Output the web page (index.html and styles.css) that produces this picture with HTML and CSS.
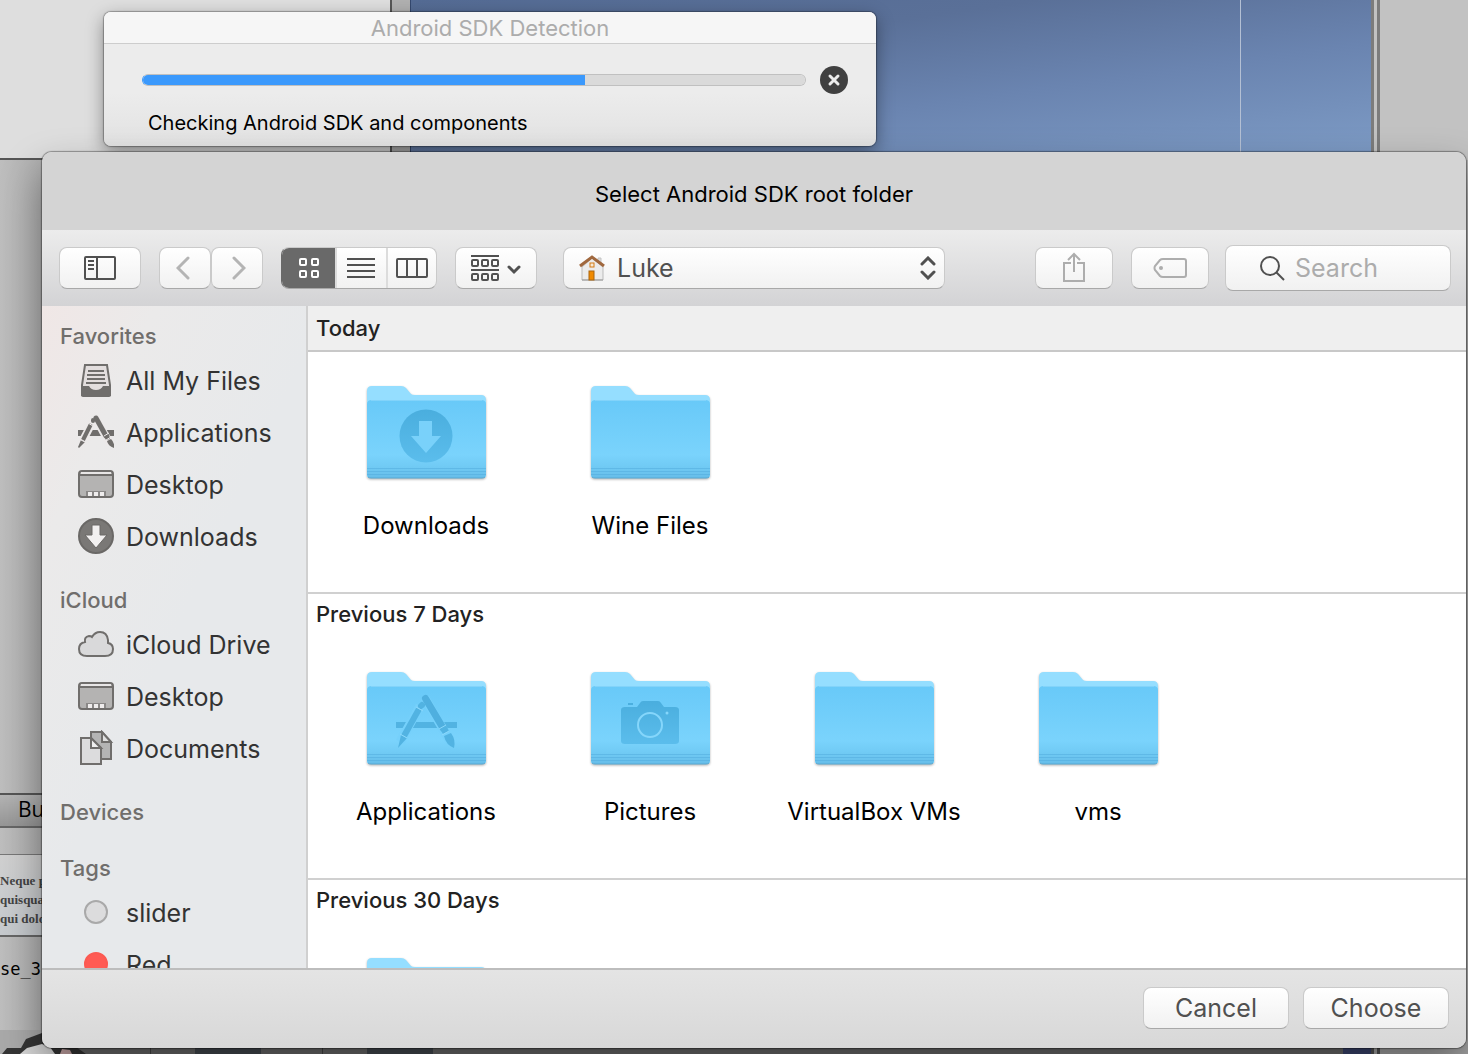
FILE: index.html
```html
<!DOCTYPE html>
<html lang="en">
<head>
    <meta charset="UTF-8">
    <meta name="viewport" content="width=device-width, initial-scale=1.0">
    <title>Select Android SDK root folder</title>
    <link rel="stylesheet" href="styles.css">
</head>
<body>
    <!-- shared icons -->
    <svg class="defs" aria-hidden="true">
        <defs>
            <linearGradient id="front" x1="0" y1="0" x2="0" y2="1">
                <stop offset="0" stop-color="#68c9f8"/>
                <stop offset="0.7" stop-color="#7ad3fc"/>
                <stop offset="0.86" stop-color="#70caf4"/>
                <stop offset="1" stop-color="#66bde9"/>
            </linearGradient>
            <linearGradient id="glyph" x1="0" y1="0" x2="0" y2="1">
                <stop offset="0" stop-color="#4aaede"/>
                <stop offset="1" stop-color="#5bbdec"/>
            </linearGradient>
            <symbol id="folder" viewBox="0 0 120 98">
                <path d="M1 92V6q0-5 5-5h29q3 0 5 2l5 6q1 1 4 1h66q5 0 5 5v77z" fill="#95deff"/>
                <path d="M1 19q0-4 5-4h109q5 0 5 4v70q0 4-4 4H5q-4 0-4-4z" fill="url(#front)"/>
                <path d="M5 15.5h111" stroke="#82d3fa" fill="none"/>
                <path d="M1 83.5h119M1 86.500h119M1 89.500h119" stroke="#4fa9dc" stroke-opacity=".5" fill="none"/>
                <path d="M2 92q1 1 3 1h111q2 0 3-1" stroke="#58a9d2" fill="none"/>
            </symbol>
            <symbol id="desktop" viewBox="0 0 36 28">
                <rect x="1" y="1" width="34" height="26" rx="3" fill="#b4b3b2" stroke="#706e6c" stroke-width="2"/>
                <path d="M3 2h30v2H3z" fill="#e8e6e6"/>
                <path d="M1 5h34" stroke="#706e6c" stroke-width="2"/>
                <path d="M8 26v-5h20v5z" fill="#8a8887"/>
                <path d="M10 22h4v4h-4zM16 22h4v4h-4zM22 22h4v4h-4z" fill="#efeded"/>
            </symbol>
        </defs>
    </svg>

    <div class="backdrop">
        <div class="editor">
            <div class="editor-side"></div>
            <div class="editor-canvas"><span class="guide"></span></div>
            <div class="editor-right"></div>
        </div>
        <div class="palette">
            <div class="palette-tab">Bu</div>
            <div class="palette-card">
                <p>Neque p</p>
                <p>quisqua</p>
                <p>qui dolo</p>
            </div>
            <div class="palette-name">se_3</div>
        </div>
        <div class="dock">
            <svg width="150" height="24" viewBox="0 0 150 24" aria-hidden="true">
                <path d="M0 0h60v24H0z" fill="#a9a9a9"/>
                <path d="M2 24l5-6h14l5-9 16-6 20 4 24 17z" fill="#353535"/>
                <path d="M20 24l7-6 15-4 8 3 5 7z" fill="#d8d8d8"/>
                <path d="M62 19l8 1 2 4H60z" fill="#caa"/>
            </svg>
            <span class="dock-tab"></span>
            <span class="dock-tab"></span>
            <span class="dock-fill"></span>
            <span class="dock-blue"></span>
            <span class="dock-end"></span>
        </div>
    </div>

    <section class="progress-window">
        <h2>Android SDK Detection</h2>
        <div class="progress-row">
            <progress id="check" max="664" value="443"></progress>
            <button class="stop" aria-label="Stop">
                <svg width="28" height="28" viewBox="0 0 28 28">
                    <circle cx="14" cy="14" r="14" fill="#404040"/>
                    <path d="M10 10l8 8M18 10l-8 8" stroke="#ececec" stroke-width="3" stroke-linecap="round"/>
                </svg>
            </button>
        </div>
        <label for="check">Checking Android SDK and components</label>
    </section>

    <section class="dialog">
        <h1>Select Android SDK root folder</h1>

        <div class="toolbar">
            <button class="btn" aria-label="Sidebar">
                <svg width="32" height="24" viewBox="0 0 32 24" fill="none" stroke="#505050" stroke-width="2">
                    <rect x="1" y="1" width="30" height="22" rx="1"/>
                    <path d="M13 1v22M4 5h6M4 9h6M4 13h6"/>
                </svg>
            </button>
            <div class="nav">
                <button class="btn" aria-label="Back">
                    <svg width="18" height="24" viewBox="0 0 18 24" fill="none" stroke="#b4b4b4" stroke-width="3" stroke-linecap="round"><path d="M12 2L2 12l10 10"/></svg>
                </button>
                <button class="btn" aria-label="Forward">
                    <svg width="18" height="24" viewBox="0 0 18 24" fill="none" stroke="#b4b4b4" stroke-width="3" stroke-linecap="round"><path d="M6 2l10 10L6 22"/></svg>
                </button>
            </div>
            <div class="views">
                <button class="active" aria-label="Icons">
                    <svg width="20" height="20" viewBox="0 0 20 20" fill="none" stroke="#fff" stroke-width="2">
                        <rect x="1" y="1" width="6" height="6" rx="1"/><rect x="13" y="1" width="6" height="6" rx="1"/>
                        <rect x="1" y="13" width="6" height="6" rx="1"/><rect x="13" y="13" width="6" height="6" rx="1"/>
                    </svg>
                </button>
                <button aria-label="List">
                    <svg width="28" height="20" viewBox="0 0 28 20" stroke="#505050" stroke-width="2"><path d="M0 1h28M0 7h28M0 13h28M0 19h28"/></svg>
                </button>
                <button aria-label="Columns">
                    <svg width="32" height="20" viewBox="0 0 32 20" fill="none" stroke="#505050" stroke-width="2"><rect x="1" y="1" width="30" height="18" rx="1"/><path d="M11 1v18M21 1v18"/></svg>
                </button>
            </div>
            <button class="btn" aria-label="Arrange">
                <svg width="50" height="26" viewBox="0 0 50 26" fill="none" stroke="#505050" stroke-width="2">
                    <path d="M0 1h28M0 15h28"/>
                    <rect x="1" y="5" width="6" height="6" rx="1"/><rect x="11" y="5" width="6" height="6" rx="1"/><rect x="21" y="5" width="6" height="6" rx="1"/>
                    <rect x="1" y="19" width="6" height="6" rx="1"/><rect x="11" y="19" width="6" height="6" rx="1"/><rect x="21" y="19" width="6" height="6" rx="1"/>
                    <path d="M38 12l5 5 5-5" stroke-width="3" stroke-linecap="round"/>
                </svg>
            </button>
            <div class="location">
                <svg width="26" height="26" viewBox="0 0 26 26" aria-hidden="true">
                    <path d="M19 3h3v7h-3z" fill="#ddd" stroke="#c4c4c4"/>
                    <path d="M13 3L3 12v13h21V12z" fill="#ececec" stroke="#bbb"/>
                    <path d="M3 25h21" stroke="#999"/>
                    <path d="M1 11L13 2l12 9" fill="none" stroke="#a0683e" stroke-width="3"/>
                    <rect x="11" y="8" width="4" height="4" fill="#f7ead8" stroke="#d47a14"/>
                    <rect x="10" y="16" width="5" height="9" fill="#f08a00" stroke="#a9640f"/>
                </svg>
                <select aria-label="Folder"><option>Luke</option></select>
                <svg class="arrows" width="16" height="24" viewBox="0 0 16 24" fill="none" stroke="#505050" stroke-width="3" stroke-linecap="round" aria-hidden="true"><path d="M2 8l6-6 6 6M2 16l6 6 6-6"/></svg>
            </div>
            <button class="btn share" aria-label="Share">
                <svg width="22" height="32" viewBox="0 0 22 32" fill="none" stroke="#adadad" stroke-width="2"><path d="M8 11H1v18h20V11h-7M11 20V2M5 8l6-6 6 6"/></svg>
            </button>
            <button class="btn tag" aria-label="Tags">
                <svg width="34" height="20" viewBox="0 0 34 20" fill="none" stroke="#adadad" stroke-width="2"><path d="M10 1h21q2 0 2 2v14q0 2-2 2H10q-2 0-3-1l-5-6q-1-2 0-4l5-6q1-1 3-1z"/><circle cx="8" cy="10" r="2" fill="#adadad" stroke="none"/></svg>
            </button>
            <div class="search">
                <svg width="26" height="26" viewBox="0 0 26 26" fill="none" stroke="#505050" stroke-width="2" aria-hidden="true"><circle cx="11" cy="11" r="9"/><path d="M17 17l8 8"/></svg>
                <input type="text" placeholder="Search" aria-label="Search">
            </div>
        </div>

        <div class="content">
            <nav class="sidebar">
                <h3>Favorites</h3>
                <a href="#">
                    <svg width="36" height="36" viewBox="0 0 36 36"><path d="M7 3h22l3 20v10q0 1-1 1H5q-1 0-1-1V23z" fill="#e3dede" stroke="#706e6c" stroke-width="2"/><path d="M10 9h16M9 13h18M9 17h18M8 21h20" stroke="#706e6c" stroke-width="2"/><path d="M3 24h8q2 4 7 4t7-4h8v10H3z" fill="#706e6c"/></svg>
                    All My Files
                </a>
                <a href="#">
                    <svg width="36" height="36" viewBox="0 0 36 36">
                        <path d="M0 16h36v6H0z" fill="#706e6c"/>
                        <path d="M15 7L3 30" stroke="#ece9e9" stroke-width="8"/>
                        <path d="M17 3l15 27" stroke="#ece9e9" stroke-width="8"/>
                        <path d="M13 10L5 26" stroke="#706e6c" stroke-width="4"/>
                        <path d="M15 6v1" stroke="#706e6c" stroke-width="4" stroke-linecap="round"/>
                        <path d="M3 26l4 2-6 6-1-1z" fill="#706e6c"/>
                        <path d="M18 4l10 18" stroke="#706e6c" stroke-width="5" stroke-linecap="round"/>
                        <path d="M26 22l5-2 1 5-4 1zM29 27l4-2q4 4 3 9-6-2-7-7z" fill="#706e6c"/>
                        <path d="M26 22l5-3M28 26l5-3M10 9l5 3M3 26l4 2" stroke="#ece9e9"/>
                    </svg>
                    Applications
                </a>
                <a href="#"><svg width="36" height="28"><use href="#desktop"/></svg>Desktop</a>
                <a href="#">
                    <svg width="36" height="36" viewBox="0 0 36 36"><circle cx="18" cy="18" r="17" fill="#7a7876" stroke="#6a6866" stroke-width="2"/><path d="M14 7h8v10h7L18 30 7 17h7z" fill="#f2f0f0" stroke="#6a6866"/></svg>
                    Downloads
                </a>
                <h3>iCloud</h3>
                <a href="#">
                    <svg width="36" height="26" viewBox="0 0 36 26"><path d="M9 25q-8 0-8-7 0-6 6-7-1-5 4-6 2 0 3 1 3-5 8-5 7 0 8 8v3q5 1 5 6 0 7-8 7z" fill="#d9d9da" stroke="#706e6c" stroke-width="2"/></svg>
                    iCloud Drive
                </a>
                <a href="#"><svg width="36" height="28"><use href="#desktop"/></svg>Desktop</a>
                <a href="#">
                    <svg width="36" height="36" viewBox="0 0 36 36" stroke="#706e6c" stroke-width="2"><path d="M13 2h11l9 10v17H13z" fill="#b4b4b4"/><path d="M24 2v10h9z" fill="#e0e0e0"/><path d="M3 8h10l10 10v16H3z" fill="#dcdcdd"/><path d="M13 8v10h10z" fill="#efefef"/></svg>
                    Documents
                </a>
                <h3>Devices</h3>
                <h3>Tags</h3>
                <a href="#"><span class="dot"></span>slider</a>
                <a href="#"><span class="dot red"></span>Red</a>
            </nav>

            <main class="files">
                <section class="group">
                    <h3>Today</h3>
                    <div class="folders">
                        <button>
                            <svg width="120" height="98" viewBox="0 0 120 98"><use href="#folder"/><circle cx="60" cy="51" r="26.500" fill="url(#glyph)"/><path d="M53 36h13v15h9L60 68 45 51h8z" fill="#79d1fa"/></svg>
                            Downloads
                        </button>
                        <button><svg width="120" height="98"><use href="#folder"/></svg>Wine Files</button>
                    </div>
                </section>
                <section class="group">
                    <h3>Previous 7 Days</h3>
                    <div class="folders">
                        <button>
                            <svg width="120" height="98" viewBox="0 0 120 98">
                                <use href="#folder"/>
                                <path d="M30 51h61v6H30z" fill="#52b3e2"/>
                                <path d="M54 35L34 71M59 27l26 45" stroke="#75d0fb" stroke-width="9"/>
                                <path d="M53 38L38 65" stroke="#52b3e2" stroke-width="6"/>
                                <path d="M55 35l1-1" stroke="#52b3e2" stroke-width="6" stroke-linecap="round"/>
                                <path d="M35 64l6 3-9 10z" fill="#52b3e2"/>
                                <path d="M59.500 27.500L77 57" stroke="#4fafdf" stroke-width="7" stroke-linecap="round"/>
                                <path d="M74 58l6-4 3 6-6 3zM78 65l7-3q5 7 3 15-8-3-10-12z" fill="#52b3e2"/>
                                <path d="M50 36l7 4M34 63l7 4M73 58l7-4M76 64l7-4" stroke="#8bd8fb"/>
                            </svg>
                            Applications
                        </button>
                        <button>
                            <svg width="120" height="98" viewBox="0 0 120 98">
                                <use href="#folder"/>
                                <path d="M31 39q0-3 4-3h12l3-4q1-2 3-2h15q2 0 3 2l3 4h11q4 0 4 3v31q0 3-4 3H35q-4 0-4-3zM38 32h5v2h-5z" fill="url(#glyph)"/>
                                <circle cx="60" cy="54" r="12" fill="none" stroke="#85d6fb" stroke-width="2"/>
                                <circle cx="77" cy="42" r="1.500" fill="#85d6fb"/>
                            </svg>
                            Pictures
                        </button>
                        <button><svg width="120" height="98"><use href="#folder"/></svg>VirtualBox VMs</button>
                        <button><svg width="120" height="98"><use href="#folder"/></svg>vms</button>
                    </div>
                </section>
                <section class="group">
                    <h3>Previous 30 Days</h3>
                    <div class="folders">
                        <button><svg width="120" height="98"><use href="#folder"/></svg></button>
                    </div>
                </section>
            </main>
        </div>

        <div class="footer">
            <button class="btn">Cancel</button>
            <button class="btn">Choose</button>
        </div>
    </section>
</body>
</html>
```
FILE: styles.css
```css
* {
    box-sizing: border-box;
}
body {
    margin: 0;
    height: 100vh;
    position: relative;
    overflow: hidden;
    font-family: Inter, Roboto, sans-serif;
    font-size: 22px;
    color: #000;
}
h1, h2, h3, p {
    margin: 0;
}
button, select, input {
    font-family: inherit;
    color: inherit;
}
svg {
    display: block;
    flex-shrink: 0;
}
.defs {
    position: absolute;
    width: 0;
    height: 0;
}

/* Application behind the windows */
.backdrop {
    height: 100%;
    display: flex;
    flex-direction: column;
    background: linear-gradient(to right, #bebebe, #b0b0b0 42px);
}
.editor {
    display: flex;
    height: 160px;
    flex-shrink: 0;
}
.editor-side {
    width: 392px;
    background: #dedede;
    border-right: 2px solid #555;
    border-bottom: 2px solid #555;
}
.editor-canvas {
    flex: 1;
    margin-left: 18px;
    border-left: 1px solid #34486e;
    background: linear-gradient(172deg, #546b94 0%, #5a7098 30%, #6a84b0 60%, #7e9cc6 100%);
    display: flex;
    justify-content: flex-end;
}
.guide {
    width: 1px;
    margin-right: 130px;
    background: #b4c0d4;
}
.editor-right {
    width: 97px;
    border-left: 9px double #7c7c7c;
    background: #c2c2c2;
}
.palette {
    flex: 1;
    width: 60px;
    padding-top: 633px;
    overflow: hidden;
    white-space: nowrap;
}
.palette-tab {
    height: 35px;
    padding-left: 18px;
    border-top: 2px solid #555;
    border-bottom: 2px solid #666;
    background: linear-gradient(#b4b4b4, #969696);
    font: 21px/28px "Open Sans", sans-serif;
}
.palette-card {
    height: 83px;
    margin-top: 26px;
    padding-top: 16px;
    border-top: 1px solid #777;
    border-bottom: 2px solid #666;
    background: linear-gradient(#d0d0d0, #c6cace);
    color: #444;
    font: bold 13px/19px "Liberation Serif", serif;
}
.palette-name {
    margin-top: 20px;
    font: 17px/24px "DejaVu Sans Mono", monospace;
}
.dock {
    display: flex;
    height: 24px;
    background: #6b6b6b;
}
.dock-tab {
    width: 172px;
    border-left: 1px solid #444;
    background: linear-gradient(to right, #6b6b6b 44px, #444a50 44px, #444a50 110px, #6b6b6b 110px);
}
.dock-fill {
    flex: 1;
}
.dock-blue {
    width: 28px;
    background: #3c4670;
}
.dock-end {
    width: 97px;
    border-left: 9px double #555;
    background: #a8a8a8;
}

/* Progress window */
.progress-window {
    position: absolute;
    left: 104px;
    top: 12px;
    width: 772px;
    border-radius: 7px;
    background: linear-gradient(#ececec 60%, #e2e2e2);
    box-shadow: 0 0 1px 1px rgba(0, 0, 0, 0.3), 0 6px 18px rgba(0, 0, 0, 0.4);
    overflow: hidden;
    font-size: 20px;
}
.progress-window h2 {
    height: 32px;
    border-bottom: 1px solid #cdcdcd;
    background: #f6f6f6;
    color: #acacac;
    font-size: 22px;
    font-weight: 400;
    line-height: 33px;
    text-align: center;
}
.progress-row {
    display: flex;
    align-items: center;
    gap: 14px;
    padding: 22px 28px 0 38px;
}
progress {
    -webkit-appearance: none;
    appearance: none;
    flex: 1;
    height: 12px;
    border: 1px solid #c0c0c0;
    border-left-color: #3b99fc;
    border-radius: 6px;
    background: #dadada;
    overflow: hidden;
}
progress::-webkit-progress-bar {
    background: #dadada;
}
progress::-webkit-progress-value {
    background: #3b99fc;
}
.stop {
    padding: 0;
    border: 0;
    background: none;
}
.progress-window label {
    display: block;
    padding: 14px 44px 8px;
    line-height: 30px;
}

/* Folder dialog */
.dialog {
    position: absolute;
    top: 152px;
    right: 2px;
    bottom: 6px;
    left: 42px;
    display: flex;
    flex-direction: column;
    border-radius: 10px;
    background: #ececec;
    box-shadow: 0 0 1px 1px rgba(0, 0, 0, 0.35), 0 20px 40px rgba(0, 0, 0, 0.4);
    overflow: hidden;
}
.dialog h1 {
    height: 78px;
    background: #d4d4d4;
    font-size: 22px;
    font-weight: 400;
    line-height: 84px;
    text-align: center;
}
.toolbar {
    display: flex;
    align-items: center;
    gap: 18px;
    height: 76px;
    padding: 0 15px 0 17px;
    background: linear-gradient(#ececec, #d3d3d5);
}
.btn, .views, .location, .search {
    display: flex;
    align-items: center;
    justify-content: center;
    height: 42px;
    padding: 0;
    border: 1px solid #cacaca;
    border-bottom-color: #a8a8a8;
    border-radius: 8px;
    background: linear-gradient(#fff, #f1f1f1);
    color: #505050;
    font-size: 25px;
}
.toolbar > .btn {
    width: 82px;
}
.nav {
    display: flex;
}
.nav .btn {
    width: 52px;
}
.views {
    width: 156px;
    overflow: hidden;
    border-left-color: #696969;
}
.views button {
    display: flex;
    flex: 1;
    align-items: center;
    justify-content: center;
    height: 42px;
    padding: 0;
    border: 0;
    border-left: 2px solid #dcdcdc;
    background: none;
}
.views .active {
    flex: 0 0 53px;
    border: 0;
    background: #696969;
}
.location {
    flex: 0 1 382px;
    gap: 12px;
    margin-left: 8px;
    padding: 0 8px 0 15px;
}
.location select {
    -webkit-appearance: none;
    appearance: none;
    flex: 1;
    height: 40px;
    padding: 0;
    border: 0;
    background: none;
    font-size: 25px;
}
.arrows {
    pointer-events: none;
}
.toolbar > .share {
    width: 78px;
    margin-left: auto;
}
.toolbar > .tag {
    width: 78px;
}
.search {
    width: 226px;
    height: 46px;
    gap: 10px;
    padding-left: 33px;
    margin-left: -2px;
}
.search input {
    flex: 1;
    min-width: 0;
    padding: 0;
    border: 0;
    background: none;
    font-size: 25px;
}
.search input::placeholder {
    color: #acacac;
}
.content {
    display: flex;
    flex: 1;
    min-height: 0;
}
.sidebar {
    width: 266px;
    padding-top: 11px;
    border-right: 2px solid #d0d0d0;
    background: linear-gradient(115deg, #f0e7e6 0%, #ebeaea 20%, #e7e9eb 50%, #e7e9eb 100%);
    overflow: hidden;
}
.sidebar h3 {
    margin-top: 18px;
    padding-left: 18px;
    color: #706e6c;
    font-size: 22px;
    font-weight: 500;
    line-height: 38px;
}
.sidebar h3:first-child {
    margin-top: 0;
}
.sidebar a {
    display: flex;
    align-items: center;
    gap: 12px;
    height: 52px;
    padding-left: 36px;
    color: #333;
    font-size: 25px;
    text-decoration: none;
}
.sidebar svg {
    margin-bottom: 2px;
}
.dot {
    width: 24px;
    height: 24px;
    margin: 0 6px 2px;
    border: 2px solid #a9a9a9;
    border-radius: 50%;
    background: #dcdcdd;
}
.red {
    border-color: #fb5a52;
    background: #ff5b54;
}
.files {
    flex: 1;
    background: #fff;
    overflow: hidden;
}
.group {
    height: 286px;
}
.group h3 {
    height: 46px;
    padding-left: 8px;
    border-top: 2px solid #d0d0d0;
    color: #222;
    font-size: 22px;
    font-weight: 500;
    line-height: 40px;
}
.group:first-child h3 {
    border-top: 0;
    border-bottom: 2px solid #c8c8c8;
    background: #efefef;
    line-height: 44px;
}
.folders {
    display: grid;
    grid-template-columns: repeat(auto-fill, 224px);
    padding: 33px 0 0 6px;
}
.folders button {
    display: flex;
    flex-direction: column;
    align-items: center;
    gap: 28px;
    padding: 0;
    border: 0;
    background: none;
    font-size: 24px;
    line-height: 30px;
}
.folders svg {
    filter: drop-shadow(0 1px 1px rgba(0, 0, 0, 0.3));
}
.footer {
    display: flex;
    align-items: center;
    justify-content: flex-end;
    gap: 14px;
    height: 80px;
    padding: 0 17px 2px 0;
    border-top: 2px solid #bdbdbd;
    background: linear-gradient(#e4e4e4, #d8d8d8);
}
.footer .btn {
    width: 146px;
}
```
